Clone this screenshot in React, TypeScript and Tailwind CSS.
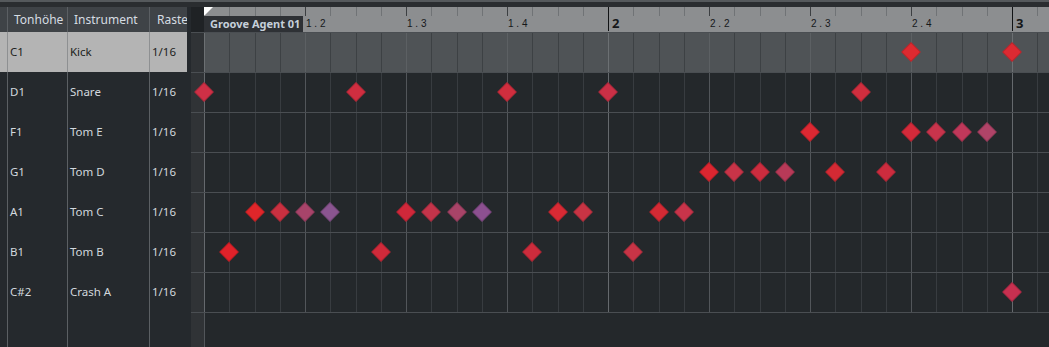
import React from "react";

type Note = [number, string];

interface Lane {
  pitch: string;
  name: string;
  notes: Note[];
}

const lanes: Lane[] = [
  { pitch: "C1", name: "Kick", notes: [[28, "#de2a30"], [32, "#dc2a32"]] },
  {
    pitch: "D1",
    name: "Snare",
    notes: [[0, "#ce3046"], [6, "#d02e40"], [12, "#d02e3e"], [16, "#cb3046"], [26, "#d02e3e"]],
  },
  {
    pitch: "F1",
    name: "Tom E",
    notes: [[24, "#dc2832"], [28, "#d42a3a"], [29, "#c8344c"], [30, "#c0385a"], [31, "#b04468"]],
  },
  {
    pitch: "G1",
    name: "Tom D",
    notes: [[20, "#dc2630"], [21, "#c83448"], [22, "#cc2c3e"], [23, "#b83a58"], [25, "#d42a34"], [27, "#cc2c3e"]],
  },
  {
    pitch: "A1",
    name: "Tom C",
    notes: [
      [2, "#e0262a"], [3, "#c93040"], [4, "#a8446a"], [5, "#8a5590"],
      [8, "#d0283a"], [9, "#c4344a"], [10, "#a84468"], [11, "#8c5090"],
      [14, "#d82a34"], [15, "#c83444"], [18, "#d42a34"], [19, "#c8344a"],
    ],
  },
  {
    pitch: "B1",
    name: "Tom B",
    notes: [[1, "#e0222a"], [7, "#d02a3a"], [13, "#cc2c3c"], [17, "#c83446"]],
  },
  { pitch: "C#2", name: "Crash A", notes: [[32, "#c83050"]] },
];

// sixteenth step in px
const X = (i: number) => Math.round(i * 25.25);
const steps = Array.from({ length: 34 }, (_, i) => i);

const font = { fontFamily: '"Noto Sans", "Open Sans", sans-serif' };

const PanelRow = ({ lane, selected }: { lane: Lane; selected: boolean }) => (
  <div
    className={`grid grid-cols-[7px_60px_82px_38px] h-[40px] text-[11.5px] ${
      selected ? "bg-[#b4b4b4] text-[#1c1e20]" : "text-[#d2d8de]"
    }`}
  >
    <div />
    <div className={`flex items-center pl-[2px] border-l ${selected ? "border-[#8e9092]" : "border-[#5b5f63]"}`}>
      {lane.pitch}
    </div>
    <div className={`flex items-center pl-[2px] border-l ${selected ? "border-[#8e9092]" : "border-[#5b5f63]"}`}>
      {lane.name}
    </div>
    <div className={`flex items-center pl-[2px] border-l ${selected ? "border-[#8e9092]" : "border-[#5b5f63]"}`}>
      1/16
    </div>
  </div>
);

const GridRow = ({ lane, selected }: { lane: Lane; selected: boolean }) => (
  <div className="relative flex h-[40px] border-t border-[#4a4e52]">
    <div className="w-[13px] bg-[#303336]" />
    <div className={`flex-1 ${selected ? "bg-[#4f5356]" : "bg-[#24282b]"}`} />
    {steps.map((i) => {
      let c = selected ? "bg-[#3d4144]" : "bg-[#383c40]";
      if (i % 4 === 0) c = selected ? "bg-[#5c6063]" : "bg-[#52565a]";
      if (i % 16 === 0) c = selected ? "bg-[#6c7073]" : "bg-[#65696d]";
      return <div key={i} className={`absolute top-0 bottom-0 w-px ${c}`} style={{ left: 13 + X(i) }} />;
    })}
    {lane.notes.map(([i, color]) => (
      <div
        key={i}
        className="absolute top-[12px] w-[14px] h-[14px] rotate-45 border border-black/15"
        style={{ left: 6 + X(i), backgroundColor: color }}
      />
    ))}
  </div>
);

const Ruler = () => (
  <div className="flex h-[25px]">
    <div className="w-[13px] bg-[#1f2225]" />
    <div className="relative flex-1 bg-[#8c8e90]">
      {steps.map((i) => {
        if (i % 16 === 0 && i > 0)
          return <div key={i} className="absolute top-0 h-[24px] w-px bg-[#111315]" style={{ left: X(i) }} />;
        const c = i % 4 === 0 ? "bg-[#3c3f42]" : "bg-[#707376]";
        return <div key={i} className={`absolute top-0 h-[9px] w-px ${c}`} style={{ left: X(i) }} />;
      })}
      {[
        [4, "1 . 2"], [8, "1 . 3"], [12, "1 . 4"],
        [20, "2 . 2"], [24, "2 . 3"], [28, "2 . 4"],
      ].map(([i, t]) => (
        <span
          key={t as string}
          className="absolute top-[12px] text-[10px] leading-none text-[#16181b] whitespace-pre"
          style={{ left: X(i as number) + 1, fontFamily: '"Liberation Sans", sans-serif' }}
        >
          {t}
        </span>
      ))}
      {[
        [16, "2"], [32, "3"],
      ].map(([i, t]) => (
        <span
          key={t as string}
          className="absolute top-[10px] text-[13px] font-bold leading-none text-[#15171a]"
          style={{ left: X(i as number) + 4, ...font }}
        >
          {t}
        </span>
      ))}
      <div className="absolute left-0 top-[9px] w-[99px] h-[16px] bg-[#2e3135] pl-[6px] text-[11px] font-bold leading-[16px] text-[#c6d0da]" style={font}>
        Groove Agent 01
      </div>
      <svg className="absolute left-0 top-0" width="9" height="9" viewBox="0 0 9 9">
        <polygon points="0,0 9,0 0,9" fill="#ffffff" />
      </svg>
    </div>
  </div>
);

export default function App() {
  return (
    <div className="w-[1049px] h-[347px] flex flex-col overflow-hidden bg-[#24282b]" style={font}>
      <div className="h-[7px] bg-[#2a2d30] border-t-2 border-[#55595c]" />
      <div className="flex flex-1 min-h-0">
        {/* track list */}
        <div className="w-[187px] flex flex-col bg-[#25292d]">
          <div className="grid grid-cols-[7px_60px_82px_38px] h-[25px] bg-[#3f4347] text-[12px] text-[#d6dce2]">
            <div />
            <div className="flex items-center pl-[6px] border-l border-[#5b5f63] overflow-hidden whitespace-nowrap">Tonhöhe</div>
            <div className="flex items-center pl-[6px] border-l border-[#5b5f63] overflow-hidden whitespace-nowrap">Instrument</div>
            <div className="flex items-center pl-[7px] border-l border-[#5b5f63] overflow-hidden whitespace-nowrap">Raste</div>
          </div>
          {lanes.map((l, k) => (
            <PanelRow key={l.pitch} lane={l} selected={k === 0} />
          ))}
          <div className="grid grid-cols-[7px_60px_82px_38px] flex-1">
            <div />
            <div className="border-l border-[#5b5f63]" />
            <div className="border-l border-[#5b5f63]" />
            <div className="border-l border-[#5b5f63]" />
          </div>
        </div>
        <div className="w-[4px] bg-[#25292d]" />
        {/* drum editor grid */}
        <div className="flex-1 flex flex-col">
          <Ruler />
          {lanes.map((l, k) => (
            <GridRow key={l.pitch} lane={l} selected={k === 0} />
          ))}
          <div className="relative flex flex-1 border-t border-[#4a4e52]">
            <div className="w-[13px] bg-[#303336]" />
            <div className="w-px bg-[#52565a]" />
            <div className="flex-1 bg-[#24282b]" />
          </div>
        </div>
      </div>
    </div>
  );
}
